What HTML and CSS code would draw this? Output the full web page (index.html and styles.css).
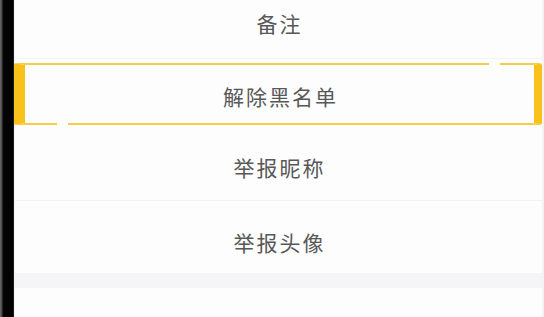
FILE: index.html
```html
<!DOCTYPE html>
<html lang="zh">
<head>
<meta charset="utf-8">
<link rel="stylesheet" href="styles.css">
</head>
<body>
<div class="frame"></div>
<div class="sheet">
  <div class="row row-note"><span class="label">备注</span></div>
  <div class="highlight">
    <span class="label">解除黑名单</span>
    <span class="gap gap-top"></span>
    <span class="gap gap-bottom"></span>
  </div>
  <div class="row row-nick"><span class="label">举报昵称</span></div>
  <div class="row row-avatar"><span class="label">举报头像</span></div>
  <div class="band"></div>
  <div class="rest"></div>
</div>
</body>
</html>
```

FILE: styles.css
```css
* { box-sizing: border-box; }
html, body {
  margin: 0;
  padding: 0;
  width: 544px;
  height: 317px;
  overflow: hidden;
  background: #fdfdfd;
}
body {
  display: flex;
  font-family: "Noto Sans CJK SC", "Noto Sans", sans-serif;
}
.frame {
  width: 14px;
  flex: none;
  background: linear-gradient(to right, #6a6a6a 0, #444 2px, #050505 3px, #000 13px, #3a3a3a 14px);
}
.sheet {
  flex: 1;
  display: flex;
  flex-direction: column;
  background: #fdfdfd;
  border-left: 1px solid #f2f2f4;
  border-right: 2px solid #f3f3f5;
}
.label {
  font-size: 21px;
  letter-spacing: 2px;
  margin-right: -2px;
  color: #585858;
  line-height: 1;
}
.row {
  display: flex;
  justify-content: center;
  align-items: center;
  flex: none;
}
.row-note {
  height: 59px;
  padding-bottom: 12px;
  border-bottom: 1px solid #f3f3f5;
}
.highlight {
  position: relative;
  flex: none;
  margin-top: 4px;
  margin-left: -1px;
  height: 62px;
  display: flex;
  justify-content: center;
  align-items: center;
  padding-top: 5px;
  border-top: 2px solid #f7cd45;
  border-bottom: 2px solid #f7cd45;
  border-left: 11px solid #f8c21a;
  border-right: 8px solid #f8c21a;
  border-radius: 2px 3px 3px 2px;
}
.gap {
  position: absolute;
  width: 11px;
  height: 4px;
  background: #fdfdfd;
}
.gap-top { top: -3px; left: 464px; }
.gap-bottom { bottom: -3px; left: 32px; }
.row-nick {
  height: 76px;
  padding-top: 10px;
  border-bottom: 1px solid #f3f3f5;
}
.row-avatar {
  height: 72px;
  padding-top: 10px;
}
.band {
  height: 15px;
  flex: none;
  background: #f5f5f7;
}
.rest {
  flex: 1;
  background: #fdfdfd;
}
```
